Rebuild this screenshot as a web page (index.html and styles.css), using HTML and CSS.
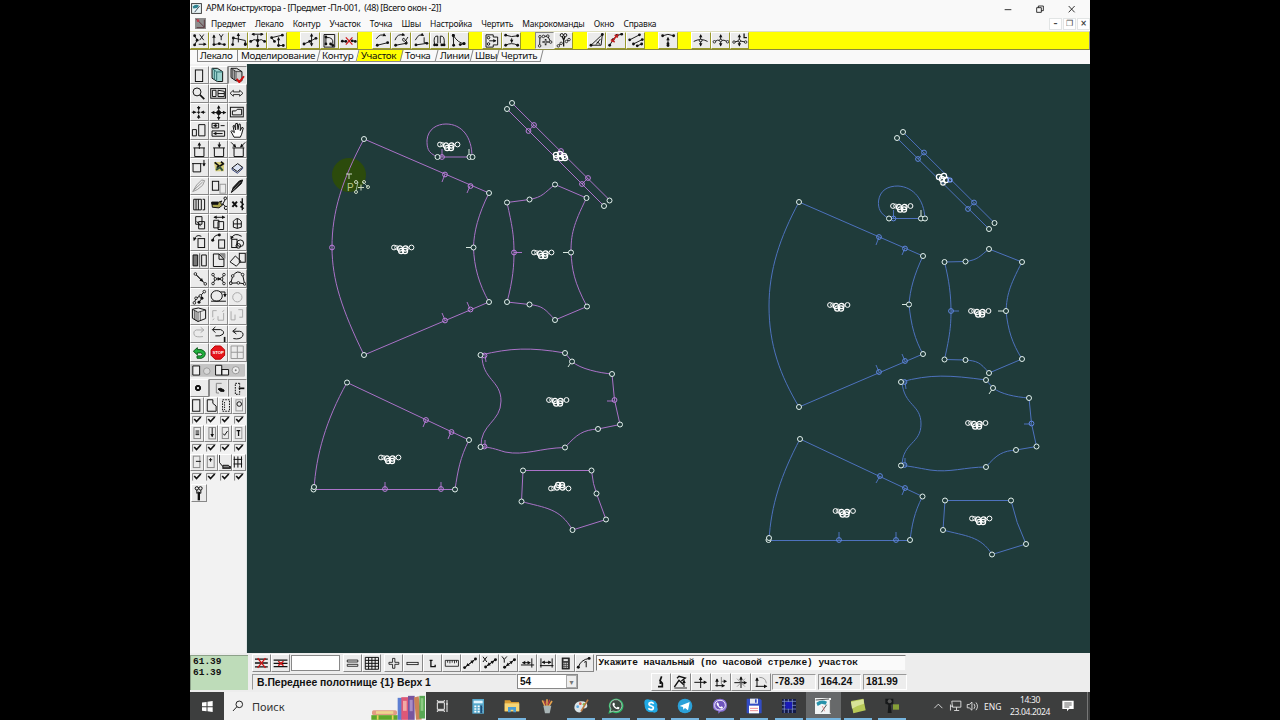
FILE: index.html
```html
<!DOCTYPE html>
<html lang="ru">
<head>
<meta charset="utf-8">
<title>АРМ Конструктора</title>
<link rel="stylesheet" href="styles.css">
</head>
<body>
<svg class="defs" width="0" height="0">
<defs>
<marker id="dot" markerUnits="userSpaceOnUse" markerWidth="14" markerHeight="14" viewBox="-7 -7 14 14"><circle r="4.500" fill="#111"/></marker>
<marker id="ring" markerUnits="userSpaceOnUse" markerWidth="14" markerHeight="14" viewBox="-7 -7 14 14"><circle r="4" fill="#eee" stroke="#111" stroke-width="2.5"/></marker>
<marker id="arr" orient="auto-start-reverse" markerUnits="userSpaceOnUse" markerWidth="16" markerHeight="16" viewBox="-12 -8 16 16"><path d="M-8 -5.500L2 0L-8 5.500Z" fill="#111" stroke="none"/></marker>
<marker id="nw" markerUnits="userSpaceOnUse" markerWidth="8" markerHeight="8" viewBox="-4 -4 8 8"><circle r="2.5" fill="#1f3b3a" stroke="#e4f2ee" stroke-width="1"/></marker>
<marker id="np" markerUnits="userSpaceOnUse" markerWidth="8" markerHeight="8" viewBox="-4 -4 8 8"><circle r="2.4" fill="none" stroke="#c07fe0" stroke-width="1"/></marker>
<marker id="nb" markerUnits="userSpaceOnUse" markerWidth="8" markerHeight="8" viewBox="-4 -4 8 8"><circle r="2.4" fill="none" stroke="#5f86e0" stroke-width="1"/></marker>
<g id="cl" fill="none" stroke="#fff"><circle cx="-8" cy="-1.500" r="2.400"/><circle cx="-5.500" cy="-1.500" r="2" opacity=".7"/><circle cx="9.500" cy="-1.500" r="2.400"/><path d="M4 -1.500H7" stroke="#fff" opacity=".5"/><g stroke-width="1.200"><circle cx="-2" cy="-.5" r="2.600"/><circle cx="3.500" cy="-.5" r="2.600"/><circle cx="-.8" cy="2" r="2.600"/><circle cx="3" cy="2" r="2.600"/></g></g>
<g id="ck" fill="none"><path d="M8 29V7H36" stroke="#666" stroke-width="2.500"/><path d="M13 15L20 23L33 9" stroke="#111" stroke-width="5"/></g>
</defs>
</svg>
<div class="app">
<header class="title">
<svg class="appicon" viewBox="0 0 36 36"><rect x="2" y="2" width="32" height="32" fill="#e8f4f6" stroke="#333" stroke-width="3"/><path d="M5 12Q14 2 26 8L20 16L8 18Z" fill="#2d8290"/><path d="M12 30L28 10" stroke="#345" stroke-width="3"/></svg>
<span class="title-text">АРМ Конструктора - [Предмет -Пл-001,&nbsp; (48) [Всего окон -2]]</span>
<svg class="winctl" viewBox="0 0 240 36"><path d="M14 23H34M110 17H124V31H110ZM115 17V12H130V26H124M206 12L224 31M224 12L206 31"/></svg>
</header>
<nav class="menu">
<svg class="docicon" viewBox="0 0 33 33"><rect width="33" height="33" fill="#8d8d8d"/><path d="M4 3L28 27M28 5V29H5" stroke="#5d3940" stroke-width="3" fill="none"/><circle cx="9" cy="8" r="4" fill="#c23b4b"/></svg>
<span>Предмет</span><span>Лекало</span><span>Контур</span><span>Участок</span><span>Точка</span><span>Швы</span><span>Настройка</span><span>Чертить</span><span>Макрокоманды</span><span>Окно</span><span>Справка</span>
<div class="mdi"><i>–</i><i>❐</i><i>×</i></div>
</nav>
<div class="tools i">
<div class="grp">
<b><svg viewBox="-1 94 58 54"><path class="p" d="M12 106L20 120L12 135"/><path d="M28 102L41 120M41 102L28 120"/><path class="a" d="M25 133H48"/></svg></b>
<b><svg viewBox="59 94 58 54"><path class="a" d="M73 131V104"/><path d="M90 101L96 110L102 101M96 110V120"/><path class="p" d="M73 134L90 131L106 134"/></svg></b>
<b><svg viewBox="118 94 58 54"><path class="a" d="M146 127V99"/><path class="p" d="M128 134L130 113M168 134V132"/><path d="M130 113L168 121V134"/></svg></b>
<b><svg viewBox="177 94 58 54"><path class="aa" d="M188 101H223"/><path d="M206 104V138"/><path class="p" d="M184 124Q194 114 206 121Q218 114 228 124"/><path class="p" d="M206 121V138"/></svg></b>
<b><svg viewBox="234 94 58 54"><path class="p" d="M281 104L247 112L256 124"/><path class="a" d="M269 138V112"/><path class="p" d="M269 137H284"/></svg></b>
</div>
<div class="grp">
<b><svg viewBox="330 94 58 54"><path class="p" d="M341 132L359 124L379 114"/><path class="aa" d="M365 138V100"/></svg></b>
<b><svg viewBox="388 94 58 54"><path d="M399 102H433V142H399Z"/><path class="p" d="M405 110V132M420 132L427 137"/><path d="M405 112Q430 108 427 132"/></svg></b>
<b><svg viewBox="448 94 58 54"><path class="p" d="M457 123L468 124M488 122L498 124"/><path d="M468 111L489 134M489 111L468 134" style="stroke:#d21a1a;stroke-width:4"/></svg></b>
</div>
<div class="grp">
<b><svg viewBox="545 94 58 54"><path class="p" d="M560 136L593 128"/><path class="a" d="M557 116Q568 97 586 106"/></svg></b>
<b><svg viewBox="605 94 58 54"><path class="p" d="M618 136L651 130"/><path class="a" d="M616 120Q623 97 646 104"/><path d="M657 110Q645 132 640 119Q641 105 655 128"/></svg></b>
<b><svg viewBox="664 94 58 54"><path class="p" d="M678 135L713 130"/><path class="a" d="M676 120Q687 97 702 105"/><path d="M704 111V128H712"/></svg></b>
<b><svg viewBox="725 94 58 54"><path d="M738 135Q732 104 748 107V130M756 130V107Q772 104 768 135"/><path class="p" d="M738 135H745M761 135H768"/></svg></b>
<b><svg viewBox="781 94 58 54"><path class="p" d="M793 105L794 136M827 131L815 134"/><path class="p" d="M793 105Q808 129 827 131"/></svg></b>
</div>
<div class="grp">
<b><svg viewBox="3 94 58 54"><path d="M14 103H37V110H51V135H37V142H14Z"/><circle cx="22" cy="112" r="4"/><circle cx="22" cy="132" r="4"/><path class="a" d="M24 122H45"/></svg></b>
<b><svg viewBox="64 94 58 54"><path class="p" d="M74 104Q92 112 112 106M74 136Q92 126 112 136"/><path class="a" d="M93 114V127"/></svg></b>
</div>
<div class="grp">
<b class="on"><svg viewBox="160 94 58 54"><path class="r" d="M174 109L173 138M185 108L199 107L208 126"/><path d="M182 126H202M192 116V136" style="stroke-width:5"/><path d="M185 126H199M192 119V133" style="stroke:#eee;stroke-width:1.500"/></svg></b>
<b><svg viewBox="219 94 58 54"><circle cx="242" cy="104" r="5"/><circle cx="253" cy="104" r="5"/><path d="M244 109L248 120L252 109M248 116V140" style="stroke-width:4"/><path class="r" d="M231 138L240 130M257 124L265 118"/></svg></b>
</div>
<div class="grp">
<b><svg viewBox="317 94 58 54"><path class="p" d="M328 136L364 102"/><path d="M328 136H360L364 102M344 134L358 116M346 126Q354 126 356 134"/></svg></b>
<b><svg viewBox="376 94 58 54"><path class="p" d="M386 136L397 118L409 105L424 101"/><path d="M392 125L413 101M390 118L402 126M402 103L412 111" style="stroke:#c32020;stroke-width:5"/></svg></b>
<b><svg viewBox="434 94 58 54"><path class="p" d="M444 119L475 103M456 132L484 118M468 138L482 132"/></svg></b>
</div>
<div class="grp">
<b><svg viewBox="532 94 58 54"><path class="p" d="M545 106Q561 97 580 106M562 137V131"/><path class="a" d="M562 136V112"/></svg></b>
</div>
<div class="grp">
<b><svg viewBox="633 94 58 54"><path d="M640 124Q662 112 684 124"/><path class="aa" d="M662 138V103"/><path class="r" d="M662 121H662"/></svg></b>
<b><svg viewBox="692 94 58 54"><path class="aa" d="M721 138V103"/><path class="r" d="M701 125Q711 117 721 121Q731 117 743 125"/></svg></b>
<b><svg viewBox="751 94 58 54"><path class="aa" d="M779 138V103"/><path class="r" d="M762 126L779 122L799 126"/><path d="M794 99V112H803" style="stroke-width:4"/></svg></b>
</div>
</div>
<div class="tabs"><span>Лекало</span><span>Моделирование</span><span>Контур</span><span class="cur">Участок</span><span>Точка</span><span>Линии</span><span>Швы</span><span>Чертить</span></div>
<main>
<aside class="i">
<div class="g3">
<b><svg viewBox="0 5 57 56"><rect x="16" y="17" width="22" height="35"/></svg></b>
<b><svg viewBox="57 5 57 56"><path d="M66 12H82L98 22V52H82L66 42Z" style="fill:#9cd3cf"/><path d="M66 12L80 23H99M80 23V52M73 17V47" style="stroke:#2e6f70"/></svg></b>
<b class="on"><svg viewBox="114 5 57 56"><path d="M123 12H140L156 22V50H138L123 40Z" style="fill:#ccc"/><path d="M123 12L138 22H156M138 22V50M128 16V43M133 18V46" style="stroke-width:2"/><path d="M140 44L148 54L162 36" style="stroke:#d01010;stroke-width:6"/></svg></b>
<b><svg viewBox="0 55 57 56"><circle cx="21" cy="79" r="12"/><path d="M30 88L43 101" style="stroke-width:5"/></svg></b>
<b><svg viewBox="57 55 57 56"><rect x="62" y="69" width="45" height="29"/><path d="M67 74H78V93H67ZM84 74L103 77V93H84ZM84 84H103"/></svg></b>
<b><svg viewBox="114 55 57 56"><path d="M120 83L130 74V79H149V74L159 83L149 92V87H130V92Z" style="stroke-width:2.500"/></svg></b>
<b><svg viewBox="0 112 57 56"><path d="M20 140H31M26 134V146"/><path class="a" d="M5 140H17"/><path class="a" d="M46 140H34"/><path class="a" d="M26 121V132"/><path class="a" d="M26 160V149"/></svg></b>
<b><svg viewBox="57 112 57 56"><circle cx="86" cy="141" r="6" class="f"/><path class="aa" d="M65 141H107"/><path class="aa" d="M86 121V162"/></svg></b>
<b><svg viewBox="114 112 57 56"><rect x="121" y="125" width="39" height="29"/><path d="M127 148V136H137L142 131H155V148Z"/></svg></b>
<b><svg viewBox="0 169 57 56"><path d="M7 195H19V214H7ZM26 180H45V214H26Z"/></svg></b>
<b><svg viewBox="57 169 57 56"><path d="M66 176H86V190H66ZM66 199H104V215H66Z"/><path class="a" d="M82 183H71"/><path class="a" d="M98 207H71"/><path d="M92 183H104"/></svg></b>
<b><svg viewBox="114 169 57 56"><path d="M132 218L123 201L125 198L133 204L129 184L133 182L137 196L137 177L142 176L144 195L147 178L151 179L151 198L156 188L160 190L155 209L151 218Z" style="fill:#fff"/></svg></b>
<b><svg viewBox="0 225 57 56"><path d="M10 249H45M14 249V275H42V249"/><path class="a" d="M28 252V234"/></svg></b>
<b><svg viewBox="57 225 57 56"><path d="M69 249H105M73 249V275H101V249"/><path class="a" d="M88 232V247"/></svg></b>
<b><svg viewBox="114 225 57 56"><path d="M127 249H163M132 249V275H160V249"/><path class="a" d="M123 232L137 246"/><path class="a" d="M166 232L152 246"/></svg></b>
<b><svg viewBox="0 282 57 56"><path d="M6 299H35M9 299V324H32V299"/><path class="a" d="M42 288V306"/></svg></b>
<b><svg viewBox="57 282 57 56"><path d="M72 294H102V322H76Z" style="fill:#d8cf7a;stroke:none"/><path d="M74 295L87 306L80 311M93 293L100 300L90 306" style="stroke-width:5"/><path d="M78 318L90 310L98 320" style="stroke:#32513c;stroke-width:6"/></svg></b>
<b><svg viewBox="114 282 57 56"><path d="M126 312L143 299L158 310L142 323Z" style="fill:#dce4f5"/><path d="M126 312V317L142 328L158 314V310" style="stroke:#2e3c72"/></svg></b>
<b><svg viewBox="0 337 57 56"><path d="M8 381L20 361L35 346L44 348L38 362L22 375ZM12 376L38 352" style="stroke:#999"/></svg></b>
<b><svg viewBox="57 337 57 56"><rect x="67" y="350" width="19" height="27"/><rect x="90" y="359" width="17" height="27" style="stroke:#999"/></svg></b>
<b><svg viewBox="114 337 57 56"><path class="f" d="M124 384L130 368L148 349L158 346L154 357L138 372Z"/><path d="M128 378L152 352" style="stroke:#ccc;stroke-width:1.500"/></svg></b>
<b><svg viewBox="0 392 57 56"><path d="M11 405H34V437H11ZM18 405V437M25 405V437M38 405H44V437H38"/></svg></b>
<b><svg viewBox="57 392 57 56"><path d="M65 414H85L96 410L92 416L97 423L87 431L67 429Z" style="fill:#a8a24c"/><path d="M65 414H84V420H66Z" class="f"/><circle cx="106" cy="402" r="4"/><circle cx="108" cy="431" r="5"/><path d="M97 423L105 407M98 418L106 427"/></svg></b>
<b><svg viewBox="114 392 57 56"><path d="M127 412L141 428M141 412L127 428" style="stroke-width:6"/><path d="M157 402V438M151 412L160 420L153 428L162 433" style="stroke-width:4"/></svg></b>

<b><svg viewBox="0 3 57 56"><path d="M17 11H36V34H17ZM26 26H44V48H26Z"/><path d="M20 25L32 40"/></svg></b>
<b><svg viewBox="57 3 57 56"><path class="aa" d="M72 13H104"/><path d="M71 22H87V45H71ZM84 26H101V50H84Z"/></svg></b>
<b><svg viewBox="114 3 57 56"><path d="M130 25Q142 9 154 25V43Q142 50 130 43ZM142 16V47M130 33H155"/></svg></b>
<b><svg viewBox="0 57 57 56"><rect x="24" y="77" width="20" height="27"/><path class="a" d="M34 70Q18 62 12 82"/></svg></b>
<b><svg viewBox="57 57 57 56"><rect x="86" y="81" width="18" height="25"/><path class="p" d="M68 82Q73 64 88 66"/></svg></b>
<b><svg viewBox="114 57 57 56"><rect x="125" y="79" width="16" height="25"/><circle cx="151" cy="91" r="10"/><path class="a" d="M155 70Q132 56 123 78"/><circle cx="145" cy="99" r="7"/></svg></b>
<b><svg viewBox="0 112 57 56"><path d="M9 124H23V157H9Z" style="fill:#777"/><path d="M29 119V162" style="stroke-width:2"/><path d="M35 124H49V157H35Z"/></svg></b>
<b><svg viewBox="57 112 57 56"><path d="M70 121H87L102 137V159H70Z"/><path d="M87 121V137H102"/><path d="M90 120L105 135V120Z" style="fill:#888;stroke:#888"/></svg></b>
<b><svg viewBox="114 112 57 56"><rect x="148" y="119" width="18" height="27"/><path d="M120 145L136 127L153 143L139 158Z"/></svg></b>
<b><svg viewBox="0 166 57 56"><path class="r" d="M16 181L46 211"/><path class="a" d="M20 185L38 203"/></svg></b>
<b><svg viewBox="57 166 57 56"><path class="r" d="M69 183L76 196L69 210M102 183L95 196L102 210"/><path class="a" d="M80 196H91"/></svg></b>
<b><svg viewBox="114 166 57 56"><path class="r" d="M122 209L128 187Q143 165 158 183L164 211L145 208Z"/></svg></b>
<b><svg viewBox="0 222 57 56"><path class="r" d="M13 267L18 253L31 246L43 233"/><path class="p" d="M27 265L36 253"/></svg></b>
<b><svg viewBox="57 222 57 56"><ellipse cx="80" cy="246" rx="17" ry="16"/><path d="M63 262H108"/><path class="a" d="M91 234H105V248"/></svg></b>
<b><svg viewBox="114 222 57 56"><circle cx="142" cy="250" r="14" style="stroke:#aaa"/></svg></b>
<b><svg viewBox="0 275 57 56"><path d="M7 285L25 281L47 287V313L24 322L7 312Z"/><path d="M7 285L24 294L47 287M24 294V322M13 287V316M18 289V320M31 292V319" style="stroke-width:2"/></svg></b>
<b><svg viewBox="57 275 57 56"><path d="M80 289H68V309M72 313L68 318M84 306V318H101V296M97 292L103 288" style="stroke:#aaa"/></svg></b>
<b><svg viewBox="114 275 57 56"><path d="M123 291V317H135V301M145 286H158V309H148" style="stroke:#aaa"/></svg></b>
<b><svg viewBox="0 332 57 56"><path d="M42 347L32 339M42 347L32 355M41 347H19Q8 350 13 363Q18 370 39 367" style="stroke:#aaa"/></svg></b>
<b><svg viewBox="57 332 57 56"><path d="M67 346L76 338M67 346L76 355M68 346H92Q105 351 99 360Q92 367 76 365"/><path d="M104 368V384" style="stroke-width:5"/></svg></b>
<b><svg viewBox="114 332 57 56"><path d="M128 351L139 342M128 351L139 359M130 351H149Q163 354 158 366Q150 377 130 373"/></svg></b>
<b><svg viewBox="0 389 57 56"><path d="M10 414L22 403V409H34Q52 416 43 430Q38 438 21 435V428H33Q42 422 32 419H22V425Z" style="fill:#21b33e;stroke:#0d5a1c"/></svg></b>
<b><svg viewBox="57 389 57 56"><path d="M75 398H92L104 410V426L92 438H75L63 426V410Z" style="fill:#e5151c;stroke:#b00"/><text x="67" y="423">STOP</text></svg></b>
<b><svg viewBox="114 389 57 56"><path d="M123 398H160V436H123ZM142 398V436M123 417H160" style="stroke:#999"/></svg></b>
</div>
<svg class="band" viewBox="0 12 171 40"><rect x="2" y="13" width="166" height="37" style="fill:#c4c4c4;stroke:#aaa;stroke-width:1"/><path d="M8 18H29V46H8ZM78 16H97V46H78ZM97 29H118V46H97Z" style="fill:#eee"/><circle cx="51" cy="34" r="10" style="fill:#d8d8d8;stroke:#888;stroke-width:2"/><circle cx="140" cy="31" r="11" style="fill:#eee;stroke:#777;stroke-width:2"/><circle cx="140" cy="31" r="3" style="fill:#777;stroke:none"/></svg>
<div class="g3 tall">
<b><svg viewBox="0 56 57 54"><circle cx="24" cy="83" r="8" class="f"/><circle cx="24" cy="83" r="2" style="fill:#fff;stroke:#fff"/></svg></b>
<b class="on"><svg viewBox="57 56 57 54"><path d="M79 69H95M79 69V98M79 98H87" style="stroke:#888"/><path d="M84 86L92 84L102 89V93H92Z" class="f"/></svg></b>
<b class="on"><svg viewBox="114 56 57 54"><path d="M149 69H136V102H149V69" stroke-dasharray="5 3"/><path d="M146 84H163" style="stroke-width:5"/></svg></b>
</div>
<div class="g4">
<b><svg viewBox="0 115 43 51"><rect x="8" y="123" width="22" height="35"/></svg></b>
<b><svg viewBox="43 115 43 51"><path d="M53 158V123H70V134L80 142V158Z"/></svg></b>
<b><svg viewBox="86 115 43 51"><rect x="100" y="123" width="21" height="35" stroke-dasharray="5 3"/><path d="M106 130V154" stroke-dasharray="4 3"/></svg></b>
<b><svg viewBox="129 115 43 51"><rect x="141" y="123" width="20" height="34" style="stroke:#999"/><circle cx="151" cy="136" r="7"/></svg></b>
<svg class="c" viewBox="0 0 43 33"><use href="#ck"/></svg><svg class="c" viewBox="0 0 43 33"><use href="#ck"/></svg><svg class="c" viewBox="0 0 43 33"><use href="#ck"/></svg><svg class="c" viewBox="0 0 43 33"><use href="#ck"/></svg>
<b><svg viewBox="0 203 43 51"><rect x="12" y="210" width="20" height="34" style="stroke:#888"/><path d="M17 221H28M17 227H28M17 232H28"/></svg></b>
<b><svg viewBox="43 203 43 51"><rect x="58" y="210" width="20" height="35" style="stroke:#888"/><path class="a" d="M68 211V238"/></svg></b>
<b><svg viewBox="86 203 43 51"><rect x="99" y="210" width="19" height="34" style="stroke:#888"/><path d="M102 229L106 234L115 221"/></svg></b>
<b><svg viewBox="129 203 43 51"><rect x="139" y="210" width="20" height="34" style="stroke:#999"/><path d="M143 220H154M149 220V236" style="stroke-width:4"/></svg></b>
<svg class="c" viewBox="0 0 43 33"><use href="#ck"/></svg><svg class="c" viewBox="0 0 43 33"><use href="#ck"/></svg><svg class="c" viewBox="0 0 43 33"><use href="#ck"/></svg><svg class="c" viewBox="0 0 43 33"><use href="#ck"/></svg>
<b><svg viewBox="0 288 43 51"><rect x="10" y="294" width="20" height="35" style="stroke:#888"/><path d="M18 310H33"/></svg></b>
<b><svg viewBox="43 288 43 51"><rect x="53" y="294" width="21" height="35" style="stroke:#888"/><path d="M63 300V311M58 305H68"/></svg></b>
<b><svg viewBox="86 288 43 51"><path d="M90 291V313L101 326H125V331H99"/><path d="M101 322H118L124 330H101Z" style="fill:#888"/></svg></b>
<b><svg viewBox="129 288 43 51"><path d="M136 295V329M147 295V329M158 295V329M134 304H160M134 318H160"/></svg></b>
<svg class="c" viewBox="0 0 43 33"><use href="#ck"/></svg><svg class="c" viewBox="0 0 43 33"><use href="#ck"/></svg><svg class="c" viewBox="0 0 43 33"><use href="#ck"/></svg><svg class="c" viewBox="0 0 43 33"><use href="#ck"/></svg>
</div>
<div class="last"><b><svg viewBox="4 373 45 54"><circle cx="20" cy="386" r="5"/><circle cx="31" cy="386" r="5"/><path d="M20 391V401L26 397L32 401V391"/><path d="M26 398V422" style="stroke-width:7"/></svg></b></div>
</aside>
<svg class="canvas" viewBox="247 64 843 589">
<ellipse cx="349" cy="175" rx="17" ry="17" fill="#2c4b0c"/>
<g class="purple">
<path d="M364 139L489 193C478 215 474 232 473.500 247C474 267 479 284 489 302L364 355C342 310 332 280 332 247C332 212 342 180 364 139Z"/>
<path d="M438 157C427 153 427 147 427 140C428 129 437 124 446 124C462 124 472 137 472 157Z"/>
<path d="M512 103L609.500 200M507 109L604 206M534 125L528.500 131M588 178L582 184"/>
<path d="M507 202.500L529.500 199.500C543 197 544 193 555 184.500L586.500 198C573 225 571 235 571 252C572 270 574 282 587 306.500L555 320C545 309 543 306 529.500 304.500L507 302C513 280 514 265 514 252C514 235 512 225 507 202.500Z"/>
<path d="M481 355C510 348 530 347 565 353L572 361.500C580 369 600 373 612 374L614.500 400L620 424.500L598 429C583 430 577 434 565 447.500C540 448 525 456 505 452C495 449 490 447 481 447M482 355C482 380 501 380 501 401C501 422 480 424 481 447"/>
<path d="M347 382.500L469 440C460 458 458 470 455 489.500H314C316 455 326 420 347 382.500Z"/>
<path d="M523 470.500H591.500Q593 485 596.500 493.500L606 519.500L572.500 530C560 508 545 508 521.500 501.500Z"/>
<path d="M445 174L442 182M470 186L467 193M445 320L442 313M470 309L467 302M442 157V149M514 252.500H522M485 355L486 362M485 447V440M614 401H607M426 420L423 427M451 432L448 439M385 489V482M441 489V482"/>
<path class="n" d="M445 174.500L470.500 186L445 320.500L470.500 309.500L332 247.500L442 157L534 125L528.500 131L561 151L588 178L582 184L514 252.500L484.500 355.500L484.500 446.500L614.500 400L426 420L451.500 432L385 489L441 489"/>
</g>
<g class="blue">
<path d="M799 202L923 256C914 275 910 290 909 304.500C911 325 915 340 923 354L799 407C780 375 769 345 769 306C769 270 780 237 799 202Z"/>
<path d="M889 218.500C880 214 878 208 878.500 201C880 190 888 186 898 186C914 187 924 200 925 218.500Z"/>
<path d="M903 132L994.500 223M897 138L989 229M924 152.500L918 159M974 202.500L968 209"/>
<path d="M944.500 262L965.500 261.500C978 260 980 256 989 249L1022 262C1009 287 1007 295 1006 311C1008 330 1012 343 1022 359L989 373C980 362 977 361 965.500 360L944.500 359.500C950 335 951 325 951 311C951 295 949 280 944.500 262Z"/>
<path d="M901 382C930 374 950 375 986 380L993 388C1001 394 1015 397 1029 398L1031.500 423.500L1036.500 446.500L1016 450C1003 451 997 454 986 467C965 467 950 473 930 470C918 468 910 466 901 465.500M902 382C904 406 921 404 921 424C921 444 903 442 902 465"/>
<path d="M800 439L922.500 496.500C914 513 912 525 910 540.500H769C771 505 781 475 800 439Z"/>
<path d="M945 500.500H1011Q1016 523 1026 544L992 554.500C981 536 965 536 943 530Z"/>
<path d="M879 237L876 245M905 248L902 255M879 372L876 365M905 361L902 354M893.500 218V210M951 311H959M905 382L906 389M905 465V458M1031 424H1024M880 476L876 483M905 488L902 495M839 540V532M896 540V532"/>
<path class="n" d="M879 237L905 248.500L905 361L879 372L893.500 218.500L924 152.500L918 159L974 202.500L968 209L951 311L904.500 382L904.500 465L1031.500 423.500L880 476L905 488L839 540L896 540"/>
</g>
<path class="white" d="M473 247.500H466M469 157V149M571 252.500H563M572 361L568 367M909 304.500H902M921 218V210M1006 311H998M993 388L989 394"/>
<path class="nodes" d="M364 139L489 193L473.500 247.500L489 302L364 355L437.500 157L469.500 157L472.500 157L512 103L507 109L609.500 200.500L604 206L507 202.500L529.500 199.500L555 184.500L586.500 198L571 252.500L587 306.500L555 320L529.500 304.500L507 302L480.500 355L565 353L572 361.500L612 374L620 424.500L598 429L565 447.500L480.500 447L347 382.500L469 440L455 489.500L313.500 489.500L314 487L523 470.500L591.500 470.500L596.500 493.500L606 519.500L572.500 530L521.500 501.500"/>
<path class="nodes" d="M799 202L923 256L909 304.500L923 354L799 407L889 218.500L921 218.500L925 218.500L903 132L897 138L994.500 223L989 229L944.500 262L965.500 261.500L989 249L1022 262L1006 311L1022 359L989 373L965.500 360L944.500 359.500L901 382L986 380L993 388L1029 398L1036.500 446.500L1016 450L986 467L901 465.500L800 439L922.500 496.500L910 540L768.500 540L769 538L945 500.500L1011 500.500L1026 544L992 554.500L943 530"/>
<use href="#cl" x="402" y="249"/><use href="#cl" x="448" y="146"/><use href="#cl" x="542" y="254"/><use href="#cl" x="557" y="401.500"/><use href="#cl" x="389" y="459"/><use href="#cl" transform="translate(559 487) scale(1 -1)"/>
<use href="#cl" x="838" y="306.500"/><use href="#cl" x="901" y="207.500"/><use href="#cl" x="979" y="312.500"/><use href="#cl" x="976" y="424.500"/><use href="#cl" x="843.500" y="512.500"/><use href="#cl" x="980" y="520"/>
<g class="knot"><circle cx="556" cy="155" r="2.600"/><circle cx="560" cy="154" r="2.600"/><circle cx="564" cy="156" r="2.600"/><circle cx="561" cy="158" r="2.600"/><circle cx="565" cy="158" r="2.600"/><circle cx="556" cy="158" r="2.300"/><circle cx="939" cy="177" r="2.600"/><circle cx="944" cy="176" r="2.600"/><circle cx="942" cy="179" r="2.600"/><circle cx="946" cy="180" r="2.600"/><circle cx="943" cy="183" r="2.200"/><circle cx="950" cy="180" r="2" style="stroke:#7fa0ff"/></g>
<g class="cursor"><path d="M346 174H352M349 174V179"/><path d="M358 182L356 191M363 182L368 187" style="stroke:#9ab5a5"/><circle cx="356" cy="182" r="1.500"/><circle cx="356" cy="192" r="1.500"/><circle cx="364" cy="182" r="1.500"/><circle cx="368" cy="187" r="1.500"/><path d="M358 187.500H364M361 184.500V190.500"/><text x="347" y="190.500">P</text></g>
</svg>
</main>
<footer class="status">
<div class="coords">61.39<br>61.39</div>
<div class="rows">
<div class="r1 i">
<b><svg viewBox="184 12 58 54"><path d="M193 27H232M193 39H232M193 51H232" style="stroke-width:4"/><path d="M201 24L225 54M225 24L201 54" style="stroke:#c11;stroke-width:4"/></svg></b>
<b><svg viewBox="243 12 58 54"><path d="M251 30H293M251 40H293M251 50H293" style="stroke-width:4"/><path d="M265 34L281 47M281 34L265 47" style="stroke:#c11;stroke-width:4"/></svg></b>
<span class="inp"></span>
<b><svg viewBox="456 12 58 54"><path d="M469 30H501V36H469ZM469 43H501V49H469Z" style="stroke-width:2.500"/></svg></b>
<b><svg viewBox="514 12 58 54"><path d="M524 22H564V58H524ZM524 31H564M524 40H564M524 49H564M534 22V58M544 22V58M554 22V58"/></svg></b>
<i class="sp"></i>
<b><svg viewBox="582 12 58 54"><path d="M608 25H615V37H627V43H615V55H608V43H597V37H608Z" style="stroke-width:2.500"/></svg></b>
<b><svg viewBox="640 12 58 54"><rect x="652" y="37" width="34" height="7" style="stroke-width:2.500"/></svg></b>
<b><svg viewBox="698 12 58 54"><path d="M718 31H727M722 31V50H735V44" style="stroke-width:4"/></svg></b>
<b><svg viewBox="753 12 58 54"><path d="M763 31H803V49H763ZM770 31V38M777 31V40M784 31V38M791 31V40M797 31V38" style="stroke-width:2.500"/></svg></b>
<b><svg viewBox="811 12 58 54"><path class="p" d="M822 53L855 27"/><path class="aa" d="M828 48L849 32"/></svg></b>
<b><svg viewBox="-7 12 58 54"><path d="M2 20L14 36M14 20L2 36"/><path class="p" d="M10 51L40 29"/><path class="aa" d="M16 46L35 33"/></svg></b>
<b><svg viewBox="51 12 58 54"><path d="M60 19L67 28L75 19M67 28V38"/><path class="p" d="M68 52L98 29"/><path class="aa" d="M74 47L92 34"/></svg></b>
<b><svg viewBox="109 12 58 54"><path d="M118 45H158M151 25V53"/><path class="aa" d="M123 38H146"/></svg></b>
<b><svg viewBox="167 12 58 54"><path d="M179 25V53M213 25V53M176 47H217"/><path class="aa" d="M183 37H209"/></svg></b>
<b><svg viewBox="226 12 58 54"><rect x="245" y="24" width="21" height="33" style="fill:#444"/><path d="M249 30H262" style="stroke:#fff;stroke-width:5"/><path d="M249 40H263M249 46H263M249 52H263" stroke-dasharray="3 2" style="stroke:#fff"/></svg></b>
<b><svg viewBox="283 12 58 54"><path class="p" d="M293 52Q300 29 326 25"/><path d="M311 37L317 34V52"/></svg></b>
<span class="msg">Укажите начальный (по часовой стрелке) участок</span>
</div>
<div class="r2 i">
<span class="name">В.Переднее полотнище {1} Верх 1</span>
<span class="combo">54<em>▾</em></span>
<i class="sp2"></i>
<b><svg viewBox="512 67 58 54"><path d="M543 77L538 90L545 98V108H532M539 90V100" style="stroke-width:5"/></svg></b>
<b><svg viewBox="575 67 58 54"><path d="M584 109L598 89L612 102M592 83L598 77L617 82L605 91" style="stroke-width:4"/><path d="M584 112H622" style="stroke:#777;stroke-width:5"/><path class="a" d="M613 109V89"/></svg></b>
<b><svg viewBox="637 67 58 54"><path class="a" d="M646 95H682"/><path class="a" d="M665 112V80"/></svg></b>
<b><svg viewBox="694 67 58 54"><path class="a" d="M711 108V85"/><path class="a" d="M706 105H733"/><path class="a" d="M723 92H739" style="stroke:#777"/><path d="M724 79V100" style="stroke:#888"/></svg></b>
<b><svg viewBox="755 67 58 54"><path class="a" d="M784 112V79"/><path class="a" d="M764 96H800"/><path d="M772 84L796 108M796 84L772 108" style="stroke:#777;stroke-width:2"/></svg></b>
<b><svg viewBox="811 67 58 54"><path class="a" d="M828 109V82"/><path class="a" d="M824 107H857"/><path d="M835 80Q854 80 856 98" style="stroke:#999"/></svg></b>
<span class="num">-78.39</span><span class="num">164.24</span><span class="num">181.99</span>
</div>
</div>
</footer>
<div class="taskbar">
<div class="start"><svg viewBox="0 0 34 34"><path d="M0 5L14 3V16H0ZM17 2L33 0V16H17ZM0 19H14V32L0 30ZM17 19H33V34L17 32Z" fill="#fff"/></svg></div>
<div class="search"><svg class="lens" viewBox="0 0 36 36"><circle cx="22" cy="13" r="10"/><path d="M15 20L3 33"/></svg><span>Поиск</span>
<svg class="books" viewBox="545 136 165 74"><rect x="548" y="181" width="75" height="15" rx="5" fill="#e39b83"/><rect x="560" y="184" width="52" height="8" fill="#edd58f"/><rect x="546" y="196" width="79" height="14" fill="#5ea72c"/><path d="M565 196V210M610 196V210" stroke="#e9d35a" stroke-width="5"/><rect x="625" y="144" width="13" height="66" fill="#5d7fd2"/><rect x="636" y="142" width="21" height="68" fill="#dd5877"/><rect x="641" y="153" width="11" height="30" fill="#f2a9a6"/><rect x="656" y="138" width="20" height="72" fill="#77559f"/><rect x="661" y="150" width="9" height="34" fill="#a88dc8"/><path d="M674 143L688 139L697 209L680 210Z" fill="#cc8255"/><rect x="690" y="138" width="17" height="68" fill="#58a854"/><rect x="694" y="145" width="8" height="38" fill="#8cca83"/></svg></div>
<div class="task"><svg viewBox="0 0 48 48"><path d="M7 14H28V34H7ZM7 6V10H28V6M7 42V38H28V42M36 6V42M33 18H39" fill="none" stroke="#eee" stroke-width="3"/></svg></div>
<div class="task"><svg viewBox="0 0 48 48"><rect x="7" y="3" width="35" height="44" fill="#57a9cc"/><path d="M11 8H38V16H11Z" fill="#e2f6ff"/><path d="M13 25H37M13 33H37M13 41H37" stroke="#fff" stroke-width="5" stroke-dasharray="6 4"/><path d="M34 22V45" stroke="#194b77" stroke-width="6"/></svg></div>
<div class="task run"><svg viewBox="0 0 48 48"><path d="M2 7H18L22 12H45V40H2Z" fill="#d99c32"/><path d="M2 16H46V40H2Z" fill="#f7d676"/><path d="M12 27H36V43H28V35H20V43H12Z" fill="#4c9ed4"/></svg></div>
<div class="task"><svg viewBox="0 0 48 48"><path d="M18 24L10 7M24 25V4M29 25L39 9" stroke="#e5a24e" stroke-width="5"/><path d="M20 20L17 8M27 20L32 5" stroke="#bf3c43" stroke-width="4"/><path d="M13 23H37L32 46H18Z" fill="#a9b5b6"/></svg></div>
<div class="task run"><svg viewBox="0 0 48 48"><path d="M4 28Q5 11 23 10Q43 9 43 25Q41 34 29 30Q27 46 15 43Q4 39 4 28Z" fill="#dce5e8"/><circle cx="14" cy="26" r="4" fill="#5aa7e1"/><circle cx="22" cy="17" r="4" fill="#dd5e4b"/><circle cx="33" cy="19" r="4" fill="#7fb950"/><path d="M24 40L45 5" stroke="#bc7941" stroke-width="5"/></svg></div>
<div class="task run"><svg viewBox="0 0 48 48"><path d="M1 47L5 34A22 22 0 1 1 14 43Z" fill="#2fb968"/><path d="M6 42L9 33A18 18 0 1 1 16 39Z" fill="#3d4a41" stroke="#fff" stroke-width="1.500"/><path d="M16 14Q12 16 14 22Q20 35 32 34Q35 32 34 28L29 26L26 29Q20 26 19 22L21 19L19 14Z" fill="#fff"/></svg></div>
<div class="task run"><svg viewBox="0 0 48 48"><circle cx="24" cy="24" r="19" fill="#20a9e4"/><circle cx="14" cy="14" r="10" fill="#20a9e4"/><circle cx="34" cy="34" r="10" fill="#20a9e4"/><path d="M32 17Q27 11 19 15Q15 21 25 24Q34 27 30 33Q24 38 16 31" fill="none" stroke="#fff" stroke-width="5"/></svg></div>
<div class="task run"><svg viewBox="0 0 48 48"><circle cx="24" cy="24" r="22" fill="#2ba1d9"/><path d="M8 24L38 12L33 37L24 30L19 35L18 27Z" fill="#fff"/></svg></div>
<div class="task run"><svg viewBox="0 0 48 48"><path d="M24 2Q44 2 45 23Q44 41 25 41L19 47V40Q2 38 3 22Q3 3 24 2Z" fill="#8a72d8"/><path d="M24 7Q39 7 40 22Q39 35 23 36Q8 35 8 22Q8 8 24 7Z" fill="#6f55bd" stroke="#fff" stroke-width="2.500"/><path d="M16 13Q12 16 15 22Q22 33 31 32L33 28L29 25L26 27Q20 25 20 21L21 18Z" fill="#fff"/></svg></div>
<div class="task run"><svg viewBox="0 0 48 48"><path d="M2 2H42L47 7V46H2Z" fill="#334cc3"/><path d="M12 2H36V17H12Z" fill="#e5e9ef"/><path d="M27 4H32V14H27Z" fill="#334cc3"/><path d="M9 23H39V46H9Z" fill="#fff"/><path d="M12 31H36M12 38H36" stroke="#ec8c94" stroke-width="3"/></svg></div>
<div class="task run"><svg viewBox="0 0 48 48"><rect x="3" y="3" width="42" height="42" fill="#141b48"/><path d="M3 10H45M3 22H45M3 33H45M10 3V45M22 3V45M34 3V45" stroke="#8ea2e8" stroke-width="2"/><rect x="13" y="12" width="20" height="20" fill="#1a1ab8"/></svg></div>
<div class="task run act"><svg viewBox="0 0 48 48"><rect width="48" height="48" fill="#f2f5f5"/><path d="M4 14Q20 3 36 11L32 20L20 17L8 24Z" fill="#2792aa"/><path d="M2 6L42 3M19 43L35 20M46 6V46" stroke="#333" stroke-width="2.500"/><path d="M22 24L29 40" stroke="#da6b6b" stroke-width="2"/></svg></div>
<div class="task run"><svg viewBox="0 0 48 48"><path d="M3 9L40 2L47 37L10 46Z" fill="#b7c957"/><path d="M3 12L41 4L42 17Q20 23 6 32Z" fill="#d8e399"/></svg></div>
<div class="task run"><svg viewBox="0 0 48 48"><path d="M4 2H28V18L20 20L23 45H11L13 20L4 17Z" fill="#17191a"/><circle cx="17" cy="10" r="6" fill="#555"/><rect x="27" y="19" width="18" height="16" fill="#869f38"/></svg></div>
<div class="tray"><svg viewBox="460 150 140 38"><path d="M464 174L476 162L488 174M516 153H543V171H518ZM530 171V180M523 181H538M512 163V181M512 168H520M562 163H568L576 156V180L568 173H562ZM582 161Q588 168 582 176M588 157Q597 168 588 180" fill="none" stroke="#eee" stroke-width="2.500"/></svg>
<span class="eng">ENG</span><span class="clock">14:30<br>23.04.2024</span>
<svg class="note" viewBox="0 0 36 36"><path d="M1 2H35V27H21L15 34V27H1Z" fill="#fff"/><path d="M7 9H29M7 15H29M7 21H22" stroke="#444" stroke-width="2.500"/></svg></div>
</div>
</div>
</body>
</html>
```
FILE: styles.css
```css
*{box-sizing:border-box}
body{margin:0;background:#000;width:1280px;height:720px;overflow:hidden;font-family:"Noto Sans",sans-serif;color:#111}
.defs{position:absolute}
svg{display:block}
.app{width:900px;height:720px;margin:0 auto;background:#f9f9f9;display:flex;flex-direction:column}
.title{height:16px;display:flex;align-items:center;font-size:9px;line-height:16px;padding-left:1px;white-space:nowrap}
.appicon{width:11px;height:11px;margin-right:4px}
.title-text{width:236px;letter-spacing:-.38px}
.winctl{width:80px;height:12px;margin-left:auto;fill:none;stroke:#111;stroke-width:2.5;margin-right:10px}
.menu{height:15px;display:flex;align-items:center;font-size:8.5px;line-height:14px;padding-left:5px;white-space:nowrap;letter-spacing:-.2px}
.docicon{width:11px;height:11px;margin-right:5px}
.menu span{margin-right:9.2px}
.mdi{margin-left:auto;display:flex;gap:1px}
.mdi i{width:13px;height:12px;border:1px solid #e2e5e5;font:bold 8px/10px "DejaVu Sans",sans-serif;text-align:center;color:#444;background:#fff}
.i b{display:block;background:#ebebeb;border:1px solid;border-color:#fff #888 #888 #fff;overflow:hidden}
.i b.on{background:#e4e4e4;border-color:#888 #eee #eee #888}
.i b svg{width:calc(100% + 2px);height:calc(100% + 2px);margin:-1px}
.i path,.i circle,.i ellipse,.i rect{stroke:#111;stroke-width:3}
.i path,.i circle,.i ellipse,.i rect{fill:none}
.i .f{fill:#111}
.i .p{marker:url(#dot)}
.i .r{marker:url(#ring)}
.i .a{marker-end:url(#arr)}
.i .aa{marker-start:url(#arr);marker-end:url(#arr)}
.tools{height:19px;background:#ff0;border-top:1px solid #dedec0;border-bottom:1px solid #8a8a3c;border-right:1px solid #888;display:flex;gap:13.6px}
.grp{display:flex}
.grp b{width:19.35px;height:17px;border-color:#fff #99992c #99992c #fff}
.tabs{height:14px;display:flex;padding-left:7px;font-size:9.8px;line-height:12px;letter-spacing:-.3px;white-space:nowrap}
.tabs span{position:relative;z-index:0;height:12px;padding-left:3px}
.tabs span::before{content:"";position:absolute;z-index:-1;inset:0;border:solid #888;border-width:0 1px 1px 0;transform:skewX(-14deg)}
.tabs span:first-child::before{border-left-width:1px;transform:none;clip-path:none}
.tabs .cur::before{background:#ff0}
.tabs span:nth-child(1){width:41px}.tabs span:nth-child(2){width:81px}.tabs span:nth-child(3){width:39px}.tabs span:nth-child(4){width:44px}.tabs span:nth-child(5){width:35px}.tabs span:nth-child(6){width:35px}.tabs span:nth-child(7){width:26px}.tabs span:nth-child(8){width:44px}
main{height:589px;display:flex}
aside{width:57px;background:#f2f2f2;padding-top:1.500px;border-right:1px solid #dfe5e5}
.g3{display:grid;grid-template-columns:repeat(3,19px);grid-auto-rows:18.5px;width:57px}
.g3 text{font:bold 13px "Liberation Sans",sans-serif;fill:#fff}
.band{width:56px;height:13px;margin:2px 0}
.tall{grid-auto-rows:18px}
.g4{display:grid;grid-template-columns:repeat(4,14.1px);grid-template-rows:17px 11.3px 17px 11.3px 17px 11.3px;margin-top:.5px}
.c{width:14px;height:11px}
.last b{width:16px;height:18px;margin:2px 0 0 1px}
.canvas{width:843px;height:589px;background:#1f3b3a;flex:none}
.canvas path{fill:none;stroke-width:1}
.purple path{stroke:#aa72c8}
.blue path{stroke:#4d72bd}
.canvas path.n,.canvas path.nodes{stroke:none}
.purple .n{marker:url(#np)}
.blue .n{marker:url(#nb)}
.nodes{marker:url(#nw)}
.white{stroke:#d8e8e0}
.knot circle{fill:none;stroke:#fff;stroke-width:1.2}
.cursor path,.cursor circle{fill:none;stroke:#c9d6c0;stroke-width:1}
.cursor text{font:10px "Liberation Sans",sans-serif;fill:#b9c98c}
.status{height:39px;display:flex;background:#ededed}
.coords{width:58px;height:35px;margin-top:2px;background:#bedcb9;border:1px solid #8da18a;border-width:1px 0 0 1px;font:bold 9.500px/11px "Liberation Mono",monospace;padding:0 2px}
.rows{margin-left:4px;width:838px}
.r1,.r2{display:flex;height:19px;align-items:center}
.r1{padding-top:1px}
.r1 b,.r2 b{width:19.1px;height:18px;flex:none}
.inp{width:49px;height:16px;background:#fff;border:1px solid #888;margin:0 3px 0 1px}
.sp{width:3px}
.msg{margin-left:2px;width:310px;height:16px;border:1px solid #888;border-color:#777 #eee #eee #777;background:#fafafa;font:bold 9.500px/13px "Liberation Mono",monospace;letter-spacing:-.06px;padding-left:1px;white-space:nowrap;overflow:hidden}
.name{width:265px;height:16px;border:1px solid #999;border-color:#999 transparent transparent #999;padding-left:4px;font:bold 10.4px/15px "Liberation Sans",sans-serif;white-space:nowrap}
.combo{width:61px;height:15px;background:#fff;border:1px solid #888;padding-left:2px;font:bold 10px/13px "Liberation Sans",sans-serif;display:flex;justify-content:space-between}
.combo em{width:11px;font:8px/13px "DejaVu Sans",sans-serif;background:#eee;border:1px solid #aaa;color:#777;text-align:center}
.sp2{width:73px}
.r2 b{width:20px}
.r2 b:last-of-type{margin-right:1px}
.num{width:43.500px;height:16px;margin-right:2px;padding-left:2px;border:1px solid;border-color:#999 #fff #fff #999;font:bold 10.4px/14px "Liberation Sans",sans-serif}
.taskbar{height:28px;background:#3d3e3e;display:flex}
.start{width:34px;display:grid;place-items:center}
.start svg{width:11px;height:11px}
.search{width:202px;background:#f1f1f1;display:flex;align-items:center;font-size:11px;color:#333;padding-left:8px}
.lens{width:12px;height:12px;fill:none;stroke:#222;stroke-width:3}
.search span{margin-left:8px;width:120px}
.books{width:55px;height:25px;align-self:flex-end;flex:none}
.task{width:34.550px;display:grid;place-items:center;padding-bottom:1px}
.task svg{width:16px;height:16px}
.run{background:linear-gradient(#76b5df,#76b5df) center bottom/28px 2px no-repeat}
.act{background-color:#67696a;background-size:100% 2px}
.tray{margin-left:auto;width:158px;display:flex;align-items:center;border-right:1px solid #777;margin-right:2px;color:#f3f3f3;font-size:8.500px;flex:none;padding-left:3px}
.tray svg{width:47px;height:13px;flex:none}
.eng{margin-left:4px;width:17px;font-size:8.500px}
.clock{width:44px;margin-left:7px;text-align:center;line-height:12.500px;font-size:8.500px;letter-spacing:-.35px}
.tray .note{width:12px;height:12px;margin-left:10px}
```
